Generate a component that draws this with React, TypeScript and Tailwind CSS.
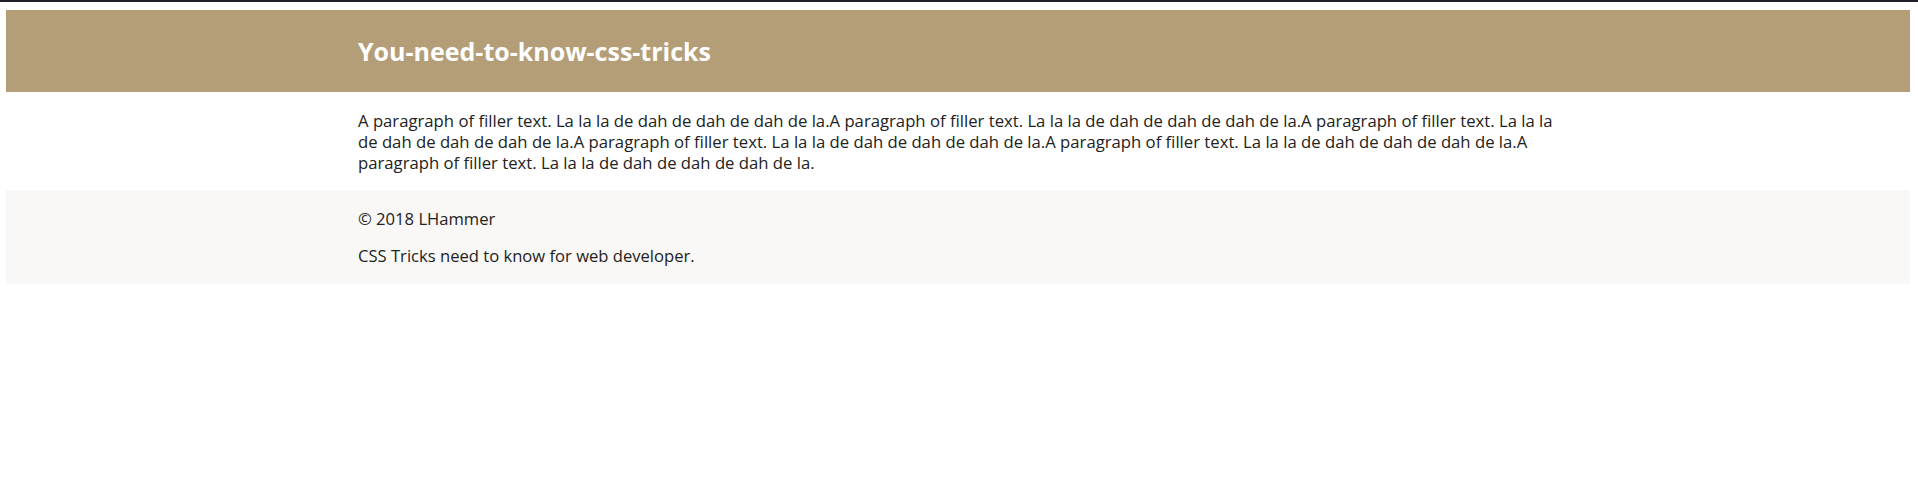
export default function App() {
  return (
    <div className="min-h-[498px] bg-white font-['Open_Sans',sans-serif] text-[#222]">
      <div className="h-[2px] bg-[#1d1f2b]" />
      <div className="pt-2 pl-[6px] pr-2">
        <header className="h-[82px] bg-[#b49e78] flex items-center">
          <div className="w-[1200px] mx-auto">
            <h1 className="text-[25px] font-bold text-white leading-none">You-need-to-know-css-tricks</h1>
          </div>
        </header>

        <main className="w-[1200px] mx-auto pt-[18px] pb-[17px]">
          <p className="text-[16.7px] leading-[21px]">
            A paragraph of filler text. La la la de dah de dah de dah de la.A paragraph of filler text. La la la de dah de dah de dah de la.A paragraph of filler text. La la la de dah de dah de dah de la.A paragraph of filler text. La la la de dah de dah de dah de la.A paragraph of filler text. La la la de dah de dah de dah de la.A paragraph of filler text. La la la de dah de dah de dah de la.
          </p>
        </main>

        <footer className="h-[94px] bg-[#f9f8f6]">
          <div className="w-[1200px] mx-auto pt-[18px] text-[16.6px] leading-[21px] flex flex-col gap-4">
            <p>© 2018 LHammer</p>
            <p>CSS Tricks need to know for web developer.</p>
          </div>
        </footer>
      </div>
    </div>
  );
}
